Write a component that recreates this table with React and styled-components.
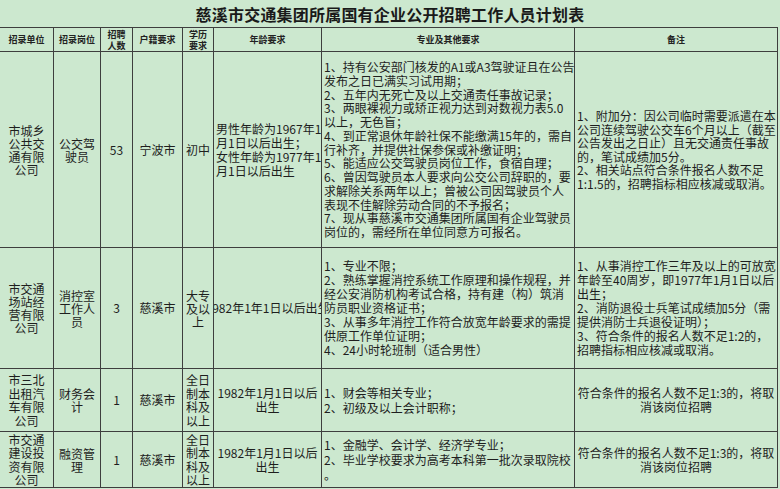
import React from "react";
import styled, { createGlobalStyle } from "styled-components";

const GlobalStyle = createGlobalStyle`
  * { box-sizing: border-box; }
  body {
    margin: 0;
    background: #cce8cf;
    font-family: "Noto Sans CJK SC", "Liberation Sans", sans-serif;
    color: #1e1e1e;
  }
`;

const COLS = "54px 47px 32px 50px 31px 108px 253px 203px";
const ROWS = "24px 196px 121px 63px 56px";

const Page = styled.div`
  width: 780px;
  height: 489px;
  overflow: hidden;
`;

const Title = styled.h1`
  margin: 0;
  height: 27px;
  display: flex;
  align-items: center;
  justify-content: center;
  font-size: 16px;
  font-weight: 700;
  letter-spacing: 0.2px;
  color: #1a1a1a;
`;

const Table = styled.div`
  display: grid;
  grid-template-columns: ${COLS};
  grid-template-rows: ${ROWS};
  width: 778px;
  border-top: 1px solid #3e3e3e;
`;

const Cell = styled.div`
  display: flex;
  flex-direction: column;
  justify-content: center;
  align-items: ${(p) => (p.$left ? "flex-start" : "center")};
  text-align: ${(p) => (p.$left ? "left" : "center")};
  padding: ${(p) => (p.$left ? "0 0 0 2px" : "0")};
  border-right: 1px solid #3e3e3e;
  border-bottom: 1px solid #3e3e3e;
  overflow: hidden;
  font-size: 12px;
  line-height: ${(p) => p.$lh || 14}px;
`;

const HeadCell = styled(Cell)`
  font-size: 9px;
  font-weight: 700;
  line-height: 11px;
  color: #222;
`;

const Line = styled.span`
  display: block;
  white-space: nowrap;
`;

const header = [
  ["招录单位"],
  ["招录岗位"],
  ["招聘", "人数"],
  ["户籍要求"],
  ["学历", "要求"],
  ["年龄要求"],
  ["专业及其他要求"],
  ["备注"],
];

const age1982 = ["1982年1月1日以后", "出生"];
const remark13 = ["符合条件的报名人数不足1:3的，将取", "消该岗位招聘"];

const rows = [
  [
    { lines: ["市城乡", "公共交", "通有限", "公司"], lh: 13 },
    { lines: ["公交驾", "驶员"], lh: 13 },
    { lines: ["53"] },
    { lines: ["宁波市"] },
    { lines: ["初中"] },
    {
      left: true,
      lines: ["男性年龄为1967年1", "月1日以后出生；", "女性年龄为1977年1", "月1日以后出生"],
    },
    {
      left: true,
      lh: 13.75,
      lines: [
        "1、持有公安部门核发的A1或A3驾驶证且在公告",
        "发布之日已满实习试用期；",
        "2、五年内无死亡及以上交通责任事故记录；",
        "3、两眼裸视力或矫正视力达到对数视力表5.0",
        "以上，无色盲；",
        "4、到正常退休年龄社保不能缴满15年的，需自",
        "行补齐，并提供社保参保或补缴证明；",
        "5、能适应公交驾驶员岗位工作，食宿自理；",
        "6、曾因驾驶员本人要求向公交公司辞职的，要",
        "求解除关系两年以上；曾被公司因驾驶员个人",
        "表现不佳解除劳动合同的不予报名；",
        "7、现从事慈溪市交通集团所属国有企业驾驶员",
        "岗位的，需经所在单位同意方可报名。",
      ],
    },
    {
      left: true,
      lh: 13.5,
      lines: [
        "1、附加分：因公司临时需要派遣在本",
        "公司连续驾驶公交车6个月以上（截至",
        "公告发出之日止）且无交通责任事故",
        "的，笔试成绩加5分。",
        "2、相关站点符合条件报名人数不足",
        "1:1.5的，招聘指标相应核减或取消。",
      ],
    },
  ],
  [
    { lines: ["市交通", "场站经", "营有限", "公司"], lh: 13 },
    { lines: ["消控室", "工作人", "员"], lh: 13 },
    { lines: ["3"] },
    { lines: ["慈溪市"] },
    { lines: ["大专", "及以", "上"], lh: 13 },
    { lines: ["1982年1年1日以后出生"] },
    {
      left: true,
      lines: [
        "1、专业不限；",
        "2、熟练掌握消控系统工作原理和操作规程，并",
        "经公安消防机构考试合格，持有建（构）筑消",
        "防员职业资格证书；",
        "3、从事多年消控工作符合放宽年龄要求的需提",
        "供原工作单位证明；",
        "4、24小时轮班制（适合男性）",
      ],
    },
    {
      left: true,
      lines: [
        "1、从事消控工作三年及以上的可放宽",
        "年龄至40周岁，即1977年1月1日以后",
        "出生；",
        "2、消防退役士兵笔试成绩加5分（需",
        "提供消防士兵退役证明）；",
        "3、符合条件的报名人数不足1:2的，",
        "招聘指标相应核减或取消。",
      ],
    },
  ],
  [
    { lines: ["市三北", "出租汽", "车有限", "公司"], lh: 13.5 },
    { lines: ["财务会", "计"], lh: 13 },
    { lines: ["1"] },
    { lines: ["慈溪市"] },
    { lines: ["全日", "制本", "科及", "以上"], lh: 13.5 },
    { lines: age1982 },
    { left: true, lh: 15, lines: ["1、财会等相关专业；", "2、初级及以上会计职称；"] },
    { lines: remark13 },
  ],
  [
    { lines: ["市交通", "建设投", "资有限", "公司"], lh: 13.5 },
    { lines: ["融资管", "理"], lh: 13 },
    { lines: ["1"] },
    { lines: ["慈溪市"] },
    { lines: ["全日", "制本", "科及", "以上"], lh: 13.5 },
    { lines: age1982 },
    {
      left: true,
      lh: 15,
      lines: ["1、金融学、会计学、经济学专业；", "2、毕业学校要求为高考本科第一批次录取院校", "。"],
    },
    { lines: remark13 },
  ],
];

export default function App() {
  return (
    <Page>
      <GlobalStyle />
      <Title>慈溪市交通集团所属国有企业公开招聘工作人员计划表</Title>
      <Table>
        {header.map((lines, i) => (
          <HeadCell key={"h" + i}>
            {lines.map((l) => (
              <Line key={l}>{l}</Line>
            ))}
          </HeadCell>
        ))}
        {rows.map((row, r) =>
          row.map((cell, c) => (
            <Cell key={r + "-" + c} $left={cell.left} $lh={cell.lh}>
              {cell.lines.map((l, k) => (
                <Line key={k}>{l}</Line>
              ))}
            </Cell>
          ))
        )}
      </Table>
    </Page>
  );
}
